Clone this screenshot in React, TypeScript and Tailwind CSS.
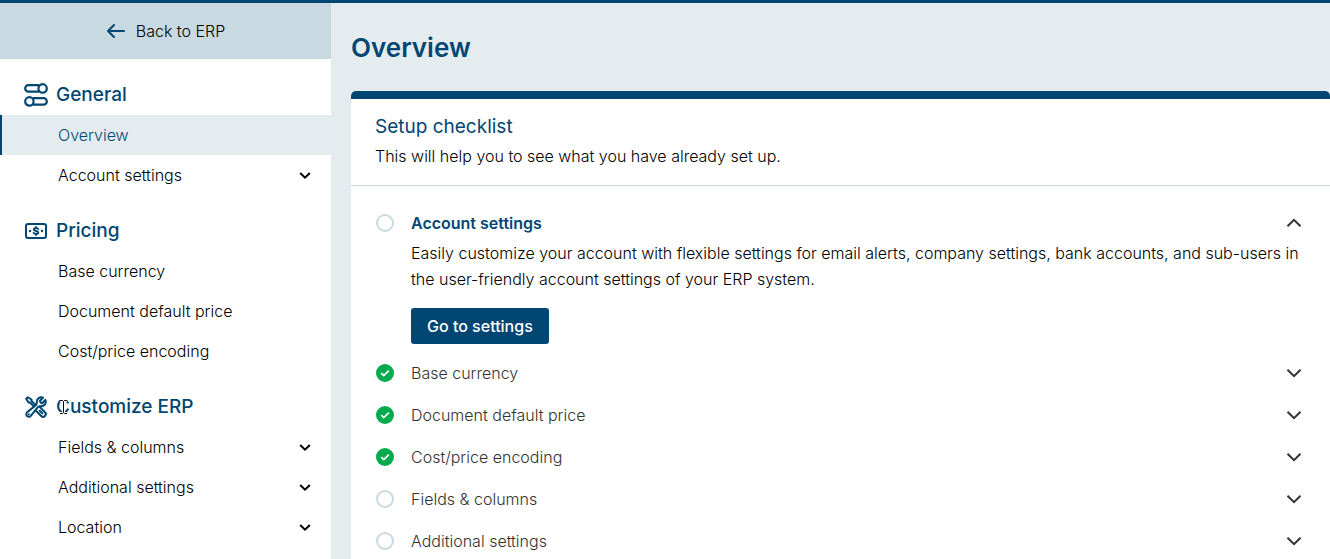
import { useState } from "react";
import type { ReactNode } from "react";
import { HiOutlineWrenchScrewdriver } from "react-icons/hi2";

type NavItem = { label: string; expandable?: boolean; active?: boolean };
type NavGroup = { title: string; icon: ReactNode; items: NavItem[] };
type Step = { label: string; done: boolean; description?: string };

function TogglesIcon() {
  return (
    <svg viewBox="0 0 24 24" className="size-6" fill="none" stroke="currentColor" strokeWidth="2.2" aria-hidden="true">
      <circle cx="18.6" cy="5.4" r="4.2" />
      <path d="M15.4 2.200H4.400a3.200 3.200 0 0 0 0 6.400h11" />
      <circle cx="5.4" cy="18.4" r="4.2" />
      <path d="M8.600 15.200h11a3.200 3.200 0 0 1 0 6.400h-11" />
    </svg>
  );
}

function BanknoteIcon() {
  return (
    <svg viewBox="0 0 24 24" className="size-6" fill="none" stroke="currentColor" strokeWidth="2" strokeLinecap="round" aria-hidden="true">
      <rect x="2" y="5" width="20" height="14" rx="2" />
      <path d="M14.200 10c-.5-.7-1.300-.9-2.200-.9-1.300 0-2.200.5-2.200 1.400 0 2 4.500 1 4.500 3 0 .9-1 1.400-2.300 1.400-1 0-1.800-.3-2.400-1M12 8v1M12 15v1" strokeWidth="1.900" />
      <circle cx="6" cy="12" r="1.200" fill="currentColor" stroke="none" />
      <circle cx="18" cy="12" r="1.200" fill="currentColor" stroke="none" />
    </svg>
  );
}

function ArrowLeftIcon() {
  return (
    <svg viewBox="0 0 20 16" className="h-4 w-5 text-[#004673]" fill="none" stroke="currentColor" strokeWidth="2" strokeLinecap="round" strokeLinejoin="round" aria-hidden="true">
      <path d="M18 8H2M8 2 2 8l6 6" />
    </svg>
  );
}

function SmallChevron() {
  return (
    <svg viewBox="0 0 12 8" className="h-2 w-3" fill="none" stroke="currentColor" strokeWidth="2" aria-hidden="true">
      <path d="M1.200 2 6 6.600 10.800 2" />
    </svg>
  );
}

function Chevron({ up }: { up: boolean }) {
  return (
    <svg viewBox="0 0 16 10" className="h-2.5 w-4 text-[#333]" fill="none" stroke="currentColor" strokeWidth="2" aria-hidden="true">
      <path d={up ? "M1.500 8.300 8 1.800 14.500 8.300" : "M1.500 1.700 8 8.200 14.500 1.700"} />
    </svg>
  );
}

function StatusIcon({ done }: { done: boolean }) {
  if (!done) {
    return <span className="size-[18px] shrink-0 rounded-full border-2 border-[#c9d9e1]" />;
  }
  return (
    <svg viewBox="0 0 18 18" className="size-[18px] shrink-0" role="img" aria-label="Done">
      <circle cx="9" cy="9" r="9" fill="#04aa4e" />
      <path d="m5.200 9.100 2.600 2.500 5-5" fill="none" stroke="#fff" strokeWidth="1.700" />
    </svg>
  );
}

function TextCursor() {
  return (
    <svg viewBox="0 0 9 16" className="absolute top-0 left-[3px] h-4 w-[9px]" fill="none" aria-hidden="true">
      <path d="M1 1.500h2.500l1 1 1-1H8M4.500 2.500v11M1 14.500h2.500l1-1 1 1H8" stroke="#fff" strokeWidth="3" />
      <path d="M1 1.500h2.500l1 1 1-1H8M4.500 2.500v11M1 14.500h2.500l1-1 1 1H8" stroke="#000" />
    </svg>
  );
}

const groups: NavGroup[] = [
  {
    title: "General",
    icon: <TogglesIcon />,
    items: [
      { label: "Overview", active: true },
      { label: "Account settings", expandable: true },
    ],
  },
  {
    title: "Pricing",
    icon: <BanknoteIcon />,
    items: [{ label: "Base currency" }, { label: "Document default price" }, { label: "Cost/price encoding" }],
  },
  {
    title: "Customize ERP",
    icon: <HiOutlineWrenchScrewdriver className="size-6 stroke-2" />,
    items: [
      { label: "Fields & columns", expandable: true },
      { label: "Additional settings", expandable: true },
      { label: "Location", expandable: true },
    ],
  },
];

const steps: Step[] = [
  {
    label: "Account settings",
    done: false,
    description:
      "Easily customize your account with flexible settings for email alerts, company settings, bank accounts, and sub-users in the user-friendly account settings of your ERP system.",
  },
  { label: "Base currency", done: true },
  { label: "Document default price", done: true },
  { label: "Cost/price encoding", done: true },
  { label: "Fields & columns", done: false },
  { label: "Additional settings", done: false },
];

function Sidebar() {
  return (
    <aside className="w-[331px] shrink-0 bg-white">
      <a href="#back" className="flex h-14 items-center justify-center gap-2.5 bg-[#c9d9e1]">
        <ArrowLeftIcon />
        Back to ERP
      </a>
      <nav>
        {groups.map((group) => (
          <section key={group.title}>
            <h2 className="flex h-14 items-center gap-2 pt-4 pl-6 text-[19px] font-medium text-[#004673]">
              {group.icon}
              <span className="relative leading-4">
                {group.title}
                {group.title === "Customize ERP" ? <TextCursor /> : null}
              </span>
            </h2>
            <ul>
              {group.items.map((item) => (
                <li key={item.label}>
                  {item.expandable ? (
                    <button type="button" className="flex h-10 w-full items-center justify-between pr-5 pl-[58px]">
                      {item.label}
                      <SmallChevron />
                    </button>
                  ) : (
                    <a
                      href="#item"
                      className={
                        item.active
                          ? "flex h-10 items-center border-l-2 border-[#004673] bg-[#e4ecef] pl-14 text-[#004673]"
                          : "flex h-10 items-center pl-[58px]"
                      }
                    >
                      {item.label}
                    </a>
                  )}
                </li>
              ))}
            </ul>
          </section>
        ))}
      </nav>
    </aside>
  );
}

export default function App() {
  const [open, setOpen] = useState<string | null>("Account settings");

  return (
    <div className="flex h-screen overflow-hidden border-t-[3px] border-[#004673] bg-[#e4ecef] font-['Inter',sans-serif] text-base font-light text-black">
      <Sidebar />
      <main className="min-w-0 flex-1 pl-5">
        <h1 className="flex h-[88px] items-center text-[26px] font-semibold text-[#004673]">Overview</h1>
        <section className="rounded-t-[5px] border-t-8 border-[#004673] bg-white">
          <header className="border-b border-[#c9d9e1] px-6 py-4">
            <h2 className="text-[19px] leading-6 font-normal text-[#004673]">Setup checklist</h2>
            <p className="mt-1 leading-[26px]">This will help you to see what you have already set up.</p>
          </header>
          <ul className="px-6 py-4">
            {steps.map((step) => {
              const isOpen = open === step.label;
              return (
                <li key={step.label} className="py-2">
                  <button
                    type="button"
                    aria-expanded={isOpen}
                    onClick={() => setOpen(isOpen ? null : step.label)}
                    className="flex h-[26px] w-full items-center gap-[17px] pr-1 pl-px text-left"
                  >
                    <StatusIcon done={step.done} />
                    <span className={isOpen ? "flex-1 font-semibold text-[#004673]" : "flex-1 text-[#333]"}>{step.label}</span>
                    <Chevron up={isOpen} />
                  </button>
                  {isOpen && step.description ? (
                    <div className="mt-1 pl-9">
                      <p className="leading-[26px]">{step.description}</p>
                      <button type="button" className="mt-4 h-9 rounded-[3px] bg-[#004673] px-4 font-medium text-white">
                        Go to settings
                      </button>
                    </div>
                  ) : null}
                </li>
              );
            })}
          </ul>
        </section>
      </main>
    </div>
  );
}
